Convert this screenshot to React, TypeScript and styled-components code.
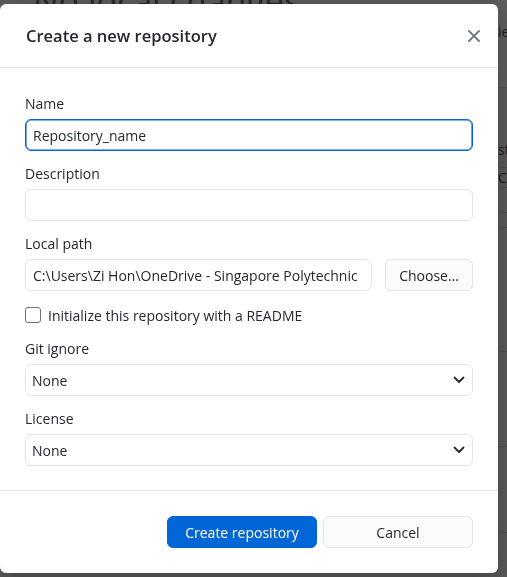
import styled, { createGlobalStyle } from "styled-components";

const GlobalStyle = createGlobalStyle`
  html, body {
    margin: 0;
    padding: 0;
    height: 100%;
    overflow: hidden;
  }
  body {
    font-family: "Open Sans", "Noto Sans", sans-serif;
    background: #5a5a5a;
    color: #24292e;
  }
  * {
    box-sizing: border-box;
  }
`;

const sideRows = [
  { height: 88, text: "ies", band: true, top: 22 },
  { height: 80, text: "st", top: 52 },
  { height: 20, text: "C", top: 0 },
  { height: 25, text: "", top: 0 },
  { height: 15, text: "", top: 0 },
  { height: 124, text: "", top: 0 },
  { height: 95, text: "", top: 0 },
  { height: 86, text: "", top: 0 },
];

/** 배경 앱 (모달 뒤, 어둡게) */
const Backdrop = (): JSX.Element => {
  return (
    <BackdropS>
      <BackMainS>
        <BackHeadingS>No local changes</BackHeadingS>
      </BackMainS>
      <BackSideS>
        {sideRows.map((row, i) => (
          <SideRowS key={i} $height={row.height} $band={row.band} $top={row.top}>
            {row.text}
          </SideRowS>
        ))}
      </BackSideS>
    </BackdropS>
  );
};

const Chevron = (): JSX.Element => (
  <svg width="12" height="8" viewBox="0 0 12 8" fill="none">
    <path d="M1.5 1.5 L6 6 L10.5 1.5" stroke="#24292e" strokeWidth="1.8" strokeLinecap="round" strokeLinejoin="round" />
  </svg>
);

const CloseIcon = (): JSX.Element => (
  <svg width="12" height="12" viewBox="0 0 12 12" fill="none">
    <path d="M1 1 L11 11 M11 1 L1 11" stroke="#6a737d" strokeWidth="1.8" strokeLinecap="round" />
  </svg>
);

const App = (): JSX.Element => {
  return (
    <>
      <GlobalStyle />
      <Backdrop />
      <DialogS>
        <DialogHeaderS>
          <h1>Create a new repository</h1>
          <CloseButtonS aria-label="Close">
            <CloseIcon />
          </CloseButtonS>
        </DialogHeaderS>

        <DialogBodyS>
          <FieldS>
            <LabelS>Name</LabelS>
            <InputS $focused defaultValue="Repository_name" />
          </FieldS>

          <FieldS>
            <LabelS>Description</LabelS>
            <InputS defaultValue="" />
          </FieldS>

          <FieldS>
            <LabelS>Local path</LabelS>
            <PathRowS>
              <InputS defaultValue="C:\Users\Zi Hon\OneDrive - Singapore Polytechnic" />
              <ChooseButtonS>Choose…</ChooseButtonS>
            </PathRowS>
          </FieldS>

          <CheckRowS>
            <CheckBoxS type="checkbox" />
            <span>Initialize this repository with a README</span>
          </CheckRowS>

          <FieldS>
            <LabelS>Git ignore</LabelS>
            <SelectS>
              <span>None</span>
              <Chevron />
            </SelectS>
          </FieldS>

          <FieldS>
            <LabelS>License</LabelS>
            <SelectS>
              <span>None</span>
              <Chevron />
            </SelectS>
          </FieldS>
        </DialogBodyS>

        <DialogFooterS>
          <ButtonS $primary>Create repository</ButtonS>
          <ButtonS>Cancel</ButtonS>
        </DialogFooterS>
      </DialogS>
    </>
  );
};

export default App;

const BackdropS = styled.div`
  display: flex;
  height: 100vh;
  background: #5a5a5a;
`;

const BackMainS = styled.div`
  width: 497px;
  flex-shrink: 0;
  overflow: hidden;
`;

const BackHeadingS = styled.h2`
  margin: -22px 0 0 33px;
  font-size: 34px;
  font-weight: 400;
  color: #262626;
  white-space: nowrap;
`;

const BackSideS = styled.div`
  flex: 1;
  overflow: hidden;
  display: flex;
  flex-direction: column;
`;

const SideRowS = styled.div<{ $height: number; $band?: boolean; $top: number }>`
  height: ${(p) => p.$height}px;
  flex-shrink: 0;
  border-bottom: 1px solid #4f4f4f;
  background: ${(p) => (p.$band ? "#5e5e5e" : "transparent")};
  display: flex;
  align-items: ${(p) => (p.$top ? "flex-start" : "center")};
  padding-top: ${(p) => p.$top}px;
  padding-left: 1px;
  font-size: 14px;
  line-height: 20px;
  color: #1e1e1e;
  white-space: nowrap;
`;

const DialogS = styled.div`
  position: fixed;
  top: 4px;
  left: 0;
  width: 498px;
  height: 569px;
  background: #fff;
  border-radius: 6px;
  box-shadow: 0 8px 24px rgba(0, 0, 0, 0.25);
  display: flex;
  flex-direction: column;
  overflow: hidden;
`;

const DialogHeaderS = styled.header`
  height: 64px;
  flex-shrink: 0;
  display: flex;
  align-items: center;
  justify-content: space-between;
  padding: 0 14px 0 26px;
  border-bottom: 1px solid #e1e4e8;

  h1 {
    margin: 0;
    font-size: 16.5px;
    font-weight: 600;
    color: #24292e;
  }
`;

const CloseButtonS = styled.button`
  border: none;
  background: none;
  padding: 4px;
  display: flex;
  cursor: pointer;
`;

const DialogBodyS = styled.div`
  flex: 1;
  padding: 26px 25px 0;
  display: flex;
  flex-direction: column;
  gap: 13px;
  border-bottom: 1px solid #e1e4e8;
`;

const FieldS = styled.div`
  display: flex;
  flex-direction: column;
  gap: 5px;
`;

const LabelS = styled.label`
  font-size: 14px;
  line-height: 20px;
  color: #24292e;
`;

const InputS = styled.input<{ $focused?: boolean }>`
  width: 100%;
  height: 32px;
  padding: 0 7px;
  font-family: inherit;
  font-size: 14px;
  color: #24292e;
  background: #fff;
  border: 1px solid ${(p) => (p.$focused ? "#0366d6" : "#e1e4e8")};
  border-radius: 6px;
  outline: none;
  box-shadow: ${(p) => (p.$focused ? "inset 0 0 0 0.6px #0366d6" : "none")};
`;

const PathRowS = styled.div`
  display: flex;
  gap: 13px;

  input {
    flex: 1;
    min-width: 0;
  }
`;

const ChooseButtonS = styled.button`
  width: 88px;
  height: 32px;
  flex-shrink: 0;
  font-family: inherit;
  font-size: 14px;
  color: #24292e;
  background: #fafbfc;
  border: 1px solid #e1e4e8;
  border-radius: 6px;
`;

const CheckRowS = styled.label`
  display: flex;
  align-items: center;
  gap: 7px;
  height: 22px;
  font-size: 14px;
  color: #24292e;
`;

const CheckBoxS = styled.input`
  appearance: none;
  width: 16px;
  height: 16px;
  margin: 0;
  border: 1px solid #6a737d;
  border-radius: 3px;
  background: #fff;
`;

const SelectS = styled.div`
  height: 32px;
  display: flex;
  align-items: center;
  justify-content: space-between;
  padding: 0 7px 0 6px;
  font-size: 14px;
  color: #24292e;
  border: 1px solid #e1e4e8;
  border-radius: 6px;
`;

const DialogFooterS = styled.footer`
  height: 82px;
  flex-shrink: 0;
  display: flex;
  align-items: center;
  justify-content: flex-end;
  gap: 6px;
  padding: 0 25px;
`;

const ButtonS = styled.button<{ $primary?: boolean }>`
  width: 150px;
  height: 32px;
  font-family: inherit;
  font-size: 14px;
  border-radius: 6px;
  color: ${(p) => (p.$primary ? "#fff" : "#24292e")};
  background: ${(p) => (p.$primary ? "#0366d6" : "#fafbfc")};
  border: 1px solid ${(p) => (p.$primary ? "#0366d6" : "#e1e4e8")};
`;
